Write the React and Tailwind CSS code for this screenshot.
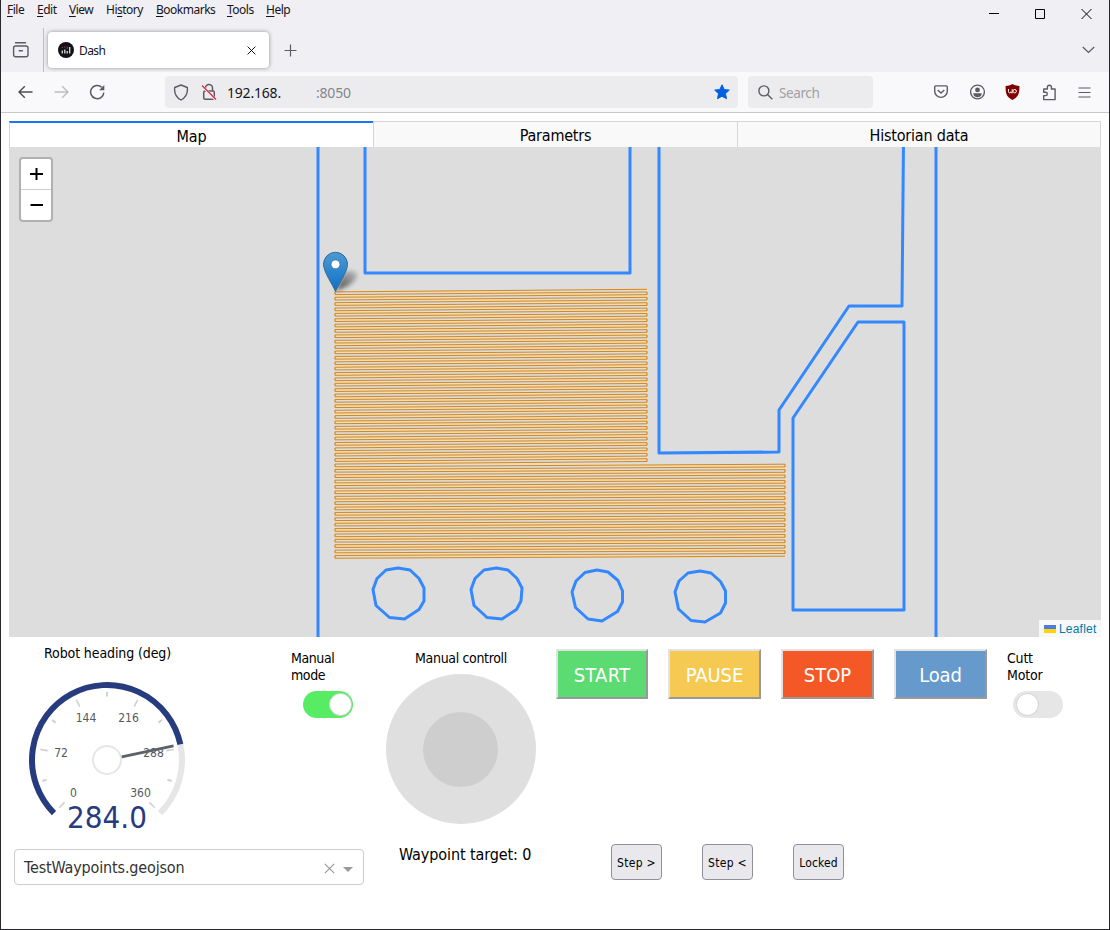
import React from "react";

const ui = "font-['Noto_Sans','Open_Sans',sans-serif]";
const page = "font-['DejaVu_Sans_Condensed','DejaVu_Sans',sans-serif] font-stretch-semi-condensed";

/* ---------- Browser chrome ---------- */

function MenuItem({ pre = "", hot, post, className }) {
  return (
    <span className={`shrink-0 whitespace-nowrap ${className}`}>
      {pre}
      <span className="underline decoration-1 underline-offset-2">{hot}</span>
      {post}
    </span>
  );
}

function TitleArea() {
  return (
    <div className={`relative flex h-[72px] shrink-0 flex-col bg-[#f0eff4] text-[#15141a] ${ui}`}>
      <div className="flex h-[28px] items-start pl-[6px] pt-[2px] text-[12px] leading-[16px] tracking-[-0.5px]">
        <MenuItem hot="F" post="ile" className="w-[30px]" />
        <MenuItem hot="E" post="dit" className="w-[32px]" />
        <MenuItem hot="V" post="iew" className="w-[37px]" />
        <MenuItem pre="Hi" hot="s" post="tory" className="w-[50px]" />
        <MenuItem hot="B" post="ookmarks" className="w-[71px]" />
        <MenuItem hot="T" post="ools" className="w-[39px]" />
        <MenuItem hot="H" post="elp" className="w-[30px]" />
      </div>
      <div className="flex h-[44px] items-start">
        <div className="flex h-[44px] w-[43px] items-center justify-center border-r border-[#bdbcc4] pr-[2px]">
          <svg width="18" height="18" viewBox="0 0 18 18" fill="none" stroke="#5b5b66" strokeWidth="1.4" strokeLinecap="round">
            <path d="M3.5 1.7h10" />
            <rect x="1.6" y="5" width="14.4" height="10.8" rx="2" />
            <path d="M7.2 9.7h3.2" />
          </svg>
        </div>
        <div className="ml-[4px] mt-[4px] flex h-[36px] w-[221px] items-center rounded-[4px] bg-white pl-[10px] shadow-[0_0_4px_rgba(0,0,0,0.4)]">
          <svg width="16" height="16" viewBox="0 0 16 16">
            <circle cx="8" cy="8" r="8" fill="#111116" />
            <path d="M4.3 8.5v3M6.8 7.5v4M9.2 9v2.5M11.7 5v6.5" stroke="#ddd" strokeWidth="1.3" />
            <path d="M4.3 5v1M6.8 4.5v1M9.2 4.5v2.5" stroke="#a04a60" strokeWidth="1" />
          </svg>
          <span className="ml-[5px] pt-[2px] text-[12px] tracking-[-0.6px]">Dash</span>
          <svg className="ml-auto mr-[13px]" width="9" height="9" viewBox="0 0 9 9" stroke="#15141a" strokeWidth="1">
            <path d="M.6.6l7.8 7.8M8.4.6L.6 8.4" />
          </svg>
        </div>
        <svg className="ml-[15px] mt-[16px]" width="13" height="13" viewBox="0 0 13 13" stroke="#5b5b66" strokeWidth="1.2">
          <path d="M6.5 .5v12M.5 6.5h12" />
        </svg>
        <svg className="ml-auto mr-[14px] mt-[18px]" width="13" height="8" viewBox="0 0 13 8" fill="none" stroke="#5b5b66" strokeWidth="1.3">
          <path d="M.8 1l5.7 5.4L12.2 1" />
        </svg>
      </div>
      <div className="absolute right-[17px] top-[8px] flex items-center gap-[36px]">
        <svg width="10" height="11" viewBox="0 0 10 11" stroke="#000"><path d="M0 5.5h10" /></svg>
        <svg width="10" height="11" viewBox="0 0 10 11" fill="none" stroke="#000"><path d="M.5 1.5h9v9h-9z" /></svg>
        <svg width="11" height="11" viewBox="0 0 11 11" stroke="#000"><path d="M.5 1l10 10M10.5 1L.5 11" /></svg>
      </div>
    </div>
  );
}

function Toolbar() {
  return (
    <div className={`flex h-[41px] shrink-0 items-center border-b border-[#c8c8cc] bg-[#f9f9fb] pl-[17px] ${ui}`}>
      <svg width="15" height="14" viewBox="0 0 15 14" fill="none" stroke="#4c4c57" strokeWidth="1.4">
        <path d="M14.5 7H1.2M6.8 1.2L1 7l5.8 5.8" />
      </svg>
      <svg className="ml-[21px]" width="15" height="14" viewBox="0 0 15 14" fill="none" stroke="#bcbcc2" strokeWidth="1.4">
        <path d="M.5 7h13.3M8.2 1.2L14 7l-5.8 5.8" />
      </svg>
      <svg className="ml-[20px]" width="17" height="16" viewBox="0 0 17 16" fill="none" stroke="#5b5b66" strokeWidth="1.5">
        <path d="M14.8 8.6a6.6 6.6 0 1 1-2-5.3" />
        <path d="M15.3 1v5.2h-5.2z" fill="#5b5b66" stroke="none" />
      </svg>
      <div className="ml-[59px] flex h-[32px] w-[573px] items-center rounded-[4px] bg-[#ececee] pl-[8px]">
        <svg width="16" height="17" viewBox="0 0 16 17" fill="none" stroke="#5b5b66" strokeWidth="1.4" strokeLinejoin="round">
          <path d="M8 1l6.3 2.5c.5 4.5-.7 9.5-6.3 12.500C2.400 13 1.200 8 1.700 3.500z" />
        </svg>
        <svg className="ml-[12px]" width="16" height="18" viewBox="0 0 16 18" fill="none" stroke="#5b5b66" strokeWidth="1.5">
          <rect x="2.700" y="8" width="10.600" height="8.300" rx="1.500" />
          <path d="M4.500 8V4.900a3.500 3.500 0 0 1 7 0V8" />
          <path d="M.6 2.500l14 14.200" stroke="#ececee" strokeWidth="2.600" />
          <path d="M1 2.500l14 14" stroke="#e22850" strokeWidth="1.200" />
        </svg>
        <span className="ml-[10px] w-[89px] whitespace-nowrap text-[14px] tracking-[-0.2px] text-[#15141a]">192.168.</span>
        <span className="whitespace-nowrap text-[14px] tracking-[-0.2px] text-[#85858c]">:8050</span>
        <svg className="ml-auto mr-[8px]" width="16" height="16" viewBox="0 0 16 16" fill="#0061e0" stroke="#0061e0" strokeLinejoin="round">
          <path d="M8 .8l2.200 4.700 5.100.6-3.800 3.500 1 5.100L8 12.200l-4.500 2.500 1-5.100L.7 6.100l5.100-.6z" />
        </svg>
      </div>
      <div className="ml-[10px] flex h-[32px] w-[125px] items-center rounded-[4px] bg-[#ececee] pl-[10px]">
        <svg width="15" height="15" viewBox="0 0 15 15" fill="none" stroke="#5b5b66" strokeWidth="1.400">
          <circle cx="5.900" cy="5.900" r="5" />
          <path d="M9.500 9.500l4.800 4.800" />
        </svg>
        <span className="ml-[6px] pt-[2px] text-[13.500px] tracking-[-0.4px] text-[#a0a0a6]">Search</span>
      </div>
      <svg className="ml-[61px]" width="14" height="14" viewBox="0 0 14 14" fill="none" stroke="#5b5b66" strokeWidth="1.400">
        <path d="M1.700.9h10.600q1 0 1 1v4.200a6.300 6.300 0 0 1-12.600 0V1.900q0-1 1-1z" />
        <path d="M3.700 4.900L7 8l3.300-3.100" />
      </svg>
      <svg className="ml-[22px]" width="16" height="16" viewBox="0 0 16 16">
        <circle cx="7.500" cy="8" r="6.900" fill="none" stroke="#5b5b66" strokeWidth="1.400" />
        <circle cx="7.500" cy="5.900" r="2.400" fill="#5b5b66" />
        <path d="M3.200 9.300h8.600c0 2.500-2 3.900-4.300 3.900s-4.300-1.400-4.300-3.900z" fill="#5b5b66" />
      </svg>
      <svg className="ml-[19px]" width="15" height="16" viewBox="0 0 15 16">
        <path d="M7.500 0C5.500 1.300 3 1.900.6 1.900.5 8.500 1 12.500 7.500 16c6.500-3.500 7-7.500 6.900-14.100C12 1.900 9.500 1.300 7.500 0z" fill="#800000" />
        <path d="M3.500 5v2.700a1.200 1.200 0 0 0 2.400 0q0 1.400 1.300 1.400V5" fill="none" stroke="#fff" strokeWidth=".9" />
        <circle cx="9.700" cy="7.200" r="1.700" fill="none" stroke="#fff" />
      </svg>
      <svg className="ml-[22px]" width="15" height="17" viewBox="0 0 15 17" fill="none" stroke="#5b5b66" strokeWidth="1.400" strokeLinejoin="round">
        <path d="M5.400 5V3.200a2 2 0 0 1 4 0V5h3.700v10.600H1.700v-4h1.900a1.500 1.500 0 0 0 0-3.400H1.700V5z" />
      </svg>
      <svg className="ml-[21px]" width="14" height="11" viewBox="0 0 14 11" stroke="#5b5b66" strokeWidth="1.200">
        <path d="M.5 1h12M.5 5.500h12M.5 10h12" />
      </svg>
    </div>
  );
}

/* ---------- Map ---------- */

// Back-and-forth mowing path: 100 passes, the first 65 end at the short edge.
const PASSES = Array.from({ length: 100 }, (_, n) => ({
  y1: 291.9 + 2.69 * n,
  x2: n < 65 ? 647 : 785,
  y2: n < 65 ? 289.3 + 2.69 * n : 464.2 + 2.706 * (n - 65),
}));

const TURNS = PASSES.slice(0, 99)
  .map((p, n) => {
    const q = PASSES[n + 1];
    return n % 2 === 0
      ? `M335 ${p.y1.toFixed(2)}V${q.y1.toFixed(2)}`
      : `M${p.x2} ${p.y2.toFixed(2)}V${q.y2.toFixed(2)}`;
  })
  .join("");

function MapView() {
  return (
    <div className="relative h-[490px] bg-[#ddd]">
      <svg className="block" width="1092" height="490" viewBox="9 147 1092 490" fill="none">
        <g stroke="#3388ff" strokeWidth="3" strokeLinejoin="round">
          <path d="M318 140V640M936 140V640" />
          <path d="M365 140V273H630V140" />
          <path d="M659 140V453L779 452V410L849 306H902L903.500 140" />
          <path d="M858 322H904V610H793V418z" />
          <path d="M398 568l12 2 9 8.500 5 9.500v13l-5 8.500-14.500 9.500-15-1.500-13.500-12-3-16 4-11 9-8.500z" />
          <path d="M496.500 568l11.500 2 9 8.500 5 9.500-1 13-4.500 8.500-14.500 9.500-15-1.500-13-12-3-16 4-11 9-8.500z" />
          <path d="M597 570l11 2 10 8.500 4.500 10.500v11l-5 9.500-15.500 9.500-14-2-12.500-11.500-3.500-15.500 4-11 9-8.500z" />
          <path d="M700 571l11 2 9.500 8.500 5 9.500v12l-5 10-15.500 9-14-1.500-12.500-11.500-3.500-17 4-11 9-8z" />
        </g>
        <g stroke="#e08600">
          {PASSES.map((p, n) => (
            <line key={n} x1="335" y1={p.y1} x2={p.x2} y2={p.y2} />
          ))}
          <path d={TURNS} strokeWidth="2" strokeOpacity=".6" />
        </g>
        <defs>
          <linearGradient id="pin" x1="0" y1="0" x2="0" y2="1">
            <stop offset="0" stopColor="#4a9ad4" />
            <stop offset="1" stopColor="#126fc6" />
          </linearGradient>
          <filter id="soft" x="-30%" y="-30%" width="160%" height="160%">
            <feGaussianBlur stdDeviation="2" />
          </filter>
          <linearGradient id="shade" x1="0" y1="1" x2="1" y2="0">
            <stop offset="0" stopColor="#000" stopOpacity=".7" />
            <stop offset="1" stopColor="#000" stopOpacity=".12" />
          </linearGradient>
        </defs>
        <path d="M336 291l7-16c4-6 13-5 14-1s-3 8-9 12z" fill="url(#shade)" filter="url(#soft)" />
        <path d="M335.500 291.500C333 285 323.500 272 323.500 264.300a12 12 0 0 1 24 0C347.500 272 338 285 335.500 291.500z" fill="url(#pin)" stroke="#2e6c97" />
        <circle cx="335.500" cy="264.300" r="4.400" fill="#fff" stroke="#2e6c97" strokeWidth=".6" />
      </svg>
      <div className="absolute left-[10px] top-[10px] flex w-[34px] flex-col rounded-[4px] border-2 border-[#b1b1b1] bg-white">
        <button className="flex h-[31px] items-center justify-center border-b border-[#ccc]">
          <svg width="13" height="13" viewBox="0 0 13 13" stroke="#000"><path d="M0 6h13M6.500 0v12" strokeWidth="2" /></svg>
        </button>
        <button className="flex h-[30px] items-center justify-center">
          <svg width="13" height="13" viewBox="0 0 13 13" stroke="#000"><path d="M.5 6h13" strokeWidth="2" /></svg>
        </button>
      </div>
      <div className="absolute bottom-0 right-0 flex h-[17px] w-[62px] items-center bg-[#f8f8f8] pl-[5px]">
        <svg className="mt-[1px]" width="12" height="8" viewBox="0 0 12 8"><path fill="#4c7be1" d="M0 0h12v4H0z" /><path fill="#ffd500" d="M0 4h12v4H0z" /></svg>
        <span className="ml-[3px] pt-[1px] font-['Liberation_Sans',Arial,sans-serif] text-[12px] leading-[16px] tracking-[0.2px] text-[#0078a8]">Leaflet</span>
      </div>
    </div>
  );
}

/* ---------- Gauge ---------- */

const CX = 107;
const CY = 760;
const at = (r, deg) => {
  const a = (deg * Math.PI) / 180;
  return `${(CX + r * Math.cos(a)).toFixed(2)} ${(CY - r * Math.sin(a)).toFixed(2)}`;
};

function Gauge() {
  const value = 12;
  return (
    <svg className="block" width="166" height="160" viewBox="24 675 166 160" fill="none">
      <path d={`M${at(75, value)}A75 75 0 0 1 ${at(75, -45)}`} stroke="#e6e6e6" strokeWidth="6" />
      <path d={`M${at(75, 225)}A75 75 0 1 1 ${at(75, value)}`} stroke="#273c7f" strokeWidth="6" />
      {[225, 171, 117, 63, 9, -45].map((a) => (
        <path key={a} d={`M${at(60, a)}L${at(67.5, a)}`} stroke="#d0d0d0" strokeWidth="1.600" />
      ))}
      {[198, 144, 90, 36, -18].map((a) => (
        <path key={a} d={`M${at(63.5, a)}L${at(68, a)}`} stroke="#d0d0d0" strokeWidth="2" />
      ))}
      <g className={page} fill="#54595f" fontSize="12" textAnchor="middle">
        <text x="73.500" y="797">0</text>
        <text x="61" y="757">72</text>
        <text x="86" y="722">144</text>
        <text x="128.500" y="722">216</text>
        <text x="153.500" y="757">288</text>
        <text x="140.500" y="797">360</text>
      </g>
      <circle cx={CX} cy={CY} r="14" stroke="#e6e6e6" strokeWidth="2" />
      <path d={`M${at(15, value)}L${at(68, value)}`} stroke="#5b6268" strokeWidth="3" />
      <text className={page} x="107" y="828" fontSize="31" fill="#273c7f" textAnchor="middle">284.0</text>
    </svg>
  );
}

/* ---------- Controls ---------- */

function Toggle({ on }) {
  return (
    <div className={`flex h-[27px] w-[50px] items-center rounded-full ${on ? "justify-end bg-[#57ec64] pr-[1px]" : "justify-start bg-[#e6e6e6] pl-[3px]"}`}>
      <div className="h-[23px] w-[23px] rounded-full border border-[#d0d0d0] bg-white" />
    </div>
  );
}

function BigButton({ className, children }) {
  return (
    <button className={`h-[50px] shrink-0 border-2 border-b-[#999] border-l-[#e2e2e2] border-r-[#999] border-t-[#e2e2e2] pt-[2px] text-[20px] text-white ${className}`}>
      {children}
    </button>
  );
}

function SmallButton({ children, className = "" }) {
  return (
    <button className={`h-[36px] w-[51px] shrink-0 whitespace-nowrap rounded-[4px] border border-[#8f8f9d] bg-[#e9e9ed] pt-[1px] text-[12px] text-black ${className}`}>
      {children}
    </button>
  );
}

function Tabs() {
  return (
    <div className="grid h-[26px] grid-cols-[364px_364px_364px] text-center text-[16px] leading-[22px] tracking-[-0.2px] text-black">
      <div className="border-l border-t-2 border-l-[#d6d6d6] border-t-[#1975fa] bg-white pt-[3px]">Map</div>
      <div className="border border-r-0 border-[#d6d6d6] bg-[#f9f9f9] pt-[3px]">Parametrs</div>
      <div className="border border-[#d6d6d6] bg-[#f9f9f9] pt-[3px]">Historian data</div>
    </div>
  );
}

export default function App() {
  return (
    <div className="flex h-[930px] w-[1110px] flex-col overflow-hidden border-b border-l border-r border-[#28282c] bg-white">
      <TitleArea />
      <Toolbar />
      <main className={`flex flex-col px-[8px] pt-[8px] text-black ${page}`}>
        <Tabs />
        <MapView />
        <div className="flex h-[207px] items-start text-[14px] leading-[17px] tracking-[-0.4px]">
          <div className="w-[282px] pt-[8px]">
            <div className="pl-[35px] tracking-[-0.1px]">Robot heading (deg)</div>
            <div className="pl-[15px] pt-[13px] tracking-normal">
              <Gauge />
            </div>
          </div>
          <div className="w-[95px] pt-[13px]">
            <div className="w-[60px]">Manual mode</div>
            <div className="pl-[12px] pt-[7px]">
              <Toggle on />
            </div>
          </div>
          <div className="flex w-[150px] flex-col items-center pt-[13px]">
            <div className="tracking-[-0.34px]">Manual controll</div>
            <div className="mt-[7px] flex h-[150px] w-[150px] items-center justify-center rounded-full bg-[#dfdfdf] pr-[1px]">
              <div className="h-[75px] w-[75px] rounded-full bg-[#cecece]" />
            </div>
          </div>
          <div className="flex gap-[20px] pl-[20px] pt-[12px]">
            <BigButton className="w-[92px] bg-[#5bdb72] tracking-[0.3px]">START</BigButton>
            <BigButton className="w-[93px] bg-[#f6ca52] tracking-[-0.1px]">PAUSE</BigButton>
            <BigButton className="w-[93px] bg-[#f55827] tracking-[0px]">STOP</BigButton>
            <BigButton className="w-[93px] bg-[#6699cc] tracking-[-0.2px]">Load</BigButton>
          </div>
          <div className="w-[80px] pl-[20px] pt-[13px]">
            <div className="w-[45px] tracking-[-0.2px]">Cutt Motor</div>
            <div className="pl-[6px] pt-[7px]">
              <Toggle />
            </div>
          </div>
        </div>
        <div className="flex items-start">
          <div className="ml-[5px] mt-[5px] flex h-[36px] w-[350px] items-center rounded-[4px] border border-[#ccc] pl-[9px] text-[16px] tracking-[-0.15px] text-[#333]">
            <span className="pt-[1px]">TestWaypoints.geojson</span>
            <svg className="ml-auto mt-[3px]" width="11" height="11" viewBox="0 0 11 11" stroke="#999" strokeWidth="1.200"><path d="M.8.8l9.400 9.400M10.200.8L.8 10.200" /></svg>
            <svg className="ml-[8px] mr-[10px] mt-[4px]" width="10" height="5" viewBox="0 0 10 5" fill="#999"><path d="M0 0h10L5 5z" /></svg>
          </div>
          <div className="w-[247px] whitespace-nowrap pl-[35px] text-[16px] leading-[22px] tracking-[-0.1px]">Waypoint target: 0</div>
          <div className="flex gap-[40px]">
            <SmallButton className="tracking-[0.3px]">Step &gt;</SmallButton>
            <SmallButton className="tracking-[0.3px]">Step &lt;</SmallButton>
            <SmallButton className="tracking-[0.1px]">Locked</SmallButton>
          </div>
        </div>
      </main>
    </div>
  );
}
